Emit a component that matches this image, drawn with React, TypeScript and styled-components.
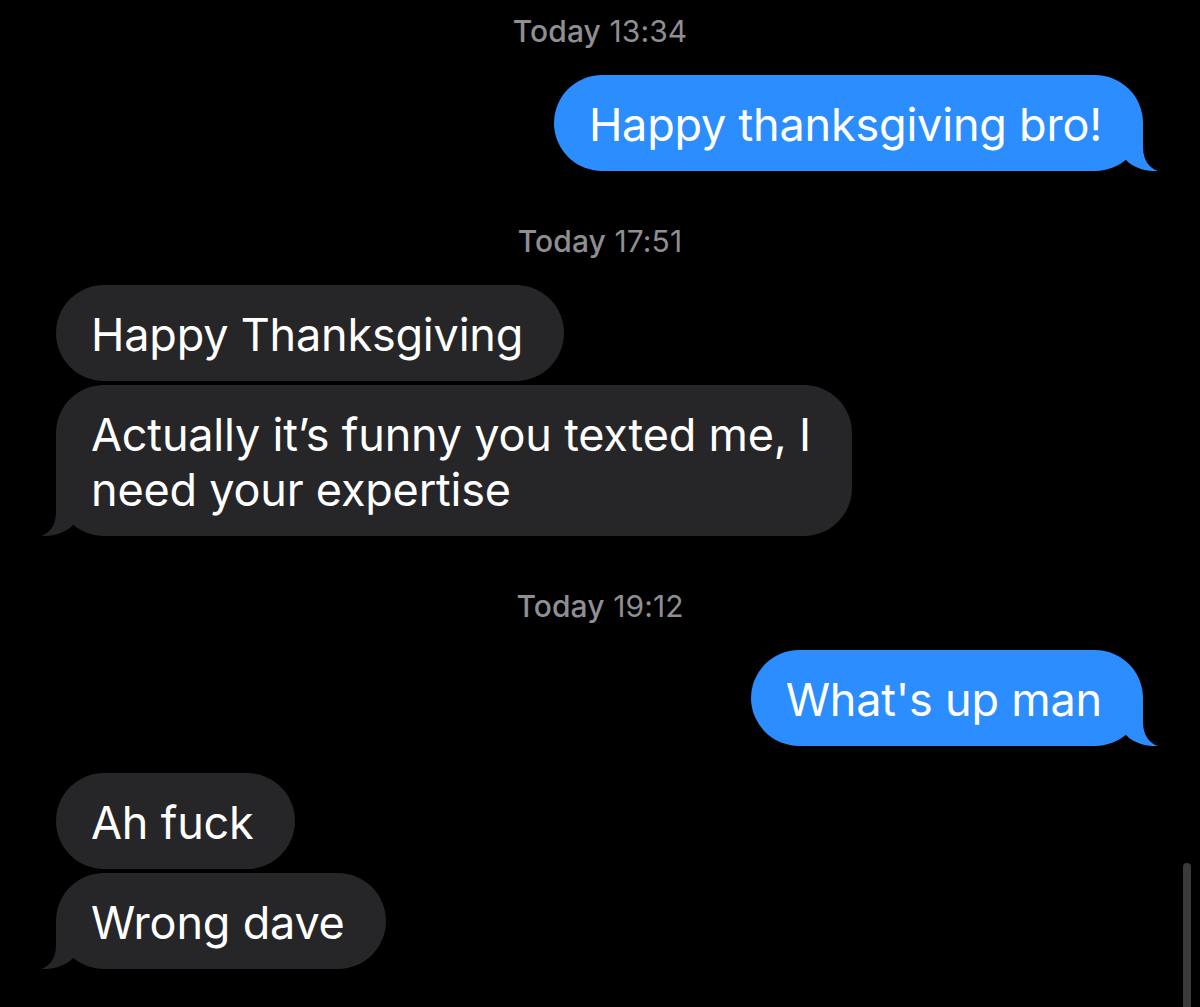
import React from "react";
import styled, { createGlobalStyle } from "styled-components";

const GlobalStyle = createGlobalStyle`
  html, body {
    margin: 0;
    padding: 0;
    background: #000;
    overflow: hidden;
  }
  body {
    font-family: Inter, "Noto Sans", "Liberation Sans", sans-serif;
    -webkit-font-smoothing: antialiased;
  }
`;

type Side = "me" | "them";

interface Message {
  lines: string[];
}

interface Group {
  side: Side;
  messages: Message[];
}

interface Section {
  time: string;
  groups: Group[];
}

const sections: Section[] = [
  {
    time: "13:34",
    groups: [{ side: "me", messages: [{ lines: ["Happy thanksgiving bro!"] }] }],
  },
  {
    time: "17:51",
    groups: [
      {
        side: "them",
        messages: [
          { lines: ["Happy Thanksgiving"] },
          { lines: ["Actually it\u2019s funny you texted me, I", "need your expertise"] },
        ],
      },
    ],
  },
  {
    time: "19:12",
    groups: [
      { side: "me", messages: [{ lines: ["What's up man"] }] },
      { side: "them", messages: [{ lines: ["Ah fuck"] }, { lines: ["Wrong dave"] }] },
    ],
  },
];

const Screen = styled.div`
  position: relative;
  width: 1200px;
  height: 1007px;
  background: #000;
  overflow: hidden;
`;

const Thread = styled.div`
  display: flex;
  flex-direction: column;
  padding-top: 14px;
`;

const SectionBlock = styled.section`
  display: flex;
  flex-direction: column;
  & + & {
    margin-top: 53px;
  }
`;

const Stamp = styled.div`
  text-align: center;
  font-size: 30px;
  line-height: 34px;
  color: #8e8e93;
  font-weight: 400;
  letter-spacing: 0.1px;
`;

const StampDay = styled.span`
  font-weight: 500;
`;

const GroupBlock = styled.div`
  display: flex;
  flex-direction: column;
  gap: 4px;
  margin-top: 27px;
`;

const Row = styled.div<{ $side: Side }>`
  display: flex;
  justify-content: ${(p) => (p.$side === "me" ? "flex-end" : "flex-start")};
  padding: ${(p) => (p.$side === "me" ? "0 57px 0 0" : "0 0 0 56px")};
`;

const Bubble = styled.div<{ $side: Side }>`
  position: relative;
  background: ${(p) => (p.$side === "me" ? "#2c8dff" : "#262628")};
  color: #fff;
  border-radius: 48px;
  padding: 22px 41px 19px 35px;
  font-size: 45px;
  line-height: 55px;
  letter-spacing: -0.2px;
  white-space: nowrap;
`;

const Tail = styled.svg<{ $side: Side }>`
  position: absolute;
  bottom: 0;
  width: 35px;
  height: 48px;
  ${(p) =>
    p.$side === "me"
      ? "right: -15px;"
      : "left: -15px; transform: scaleX(-1);"}
`;

const ScrollThumb = styled.div`
  position: absolute;
  right: 9px;
  top: 863px;
  width: 8px;
  height: 170px;
  border-radius: 4px;
  background: #3a3a3c;
`;

function BubbleTail({ side }: { side: Side }) {
  const color = side === "me" ? "#2c8dff" : "#262628";
  return (
    <Tail $side={side} viewBox="0 0 35 48" aria-hidden>
      <path
        d="M0,0 L20,0 L20,24 C20,37 26,45 35,48 C28,48.5 12,47 3,37 Z"
        fill={color}
      />
    </Tail>
  );
}

export default function App() {
  return (
    <>
      <GlobalStyle />
      <Screen>
        <Thread>
          {sections.map((s) => (
            <SectionBlock key={s.time}>
              <Stamp>
                <StampDay>Today</StampDay> {s.time}
              </Stamp>
              {s.groups.map((g, gi) => (
                <GroupBlock key={gi}>
                  {g.messages.map((m, mi) => (
                    <Row key={mi} $side={g.side}>
                      <Bubble $side={g.side}>
                        {m.lines.map((l, li) => (
                          <React.Fragment key={li}>
                            {li > 0 && <br />}
                            {l}
                          </React.Fragment>
                        ))}
                        {mi === g.messages.length - 1 && <BubbleTail side={g.side} />}
                      </Bubble>
                    </Row>
                  ))}
                </GroupBlock>
              ))}
            </SectionBlock>
          ))}
        </Thread>
        <ScrollThumb />
      </Screen>
    </>
  );
}
